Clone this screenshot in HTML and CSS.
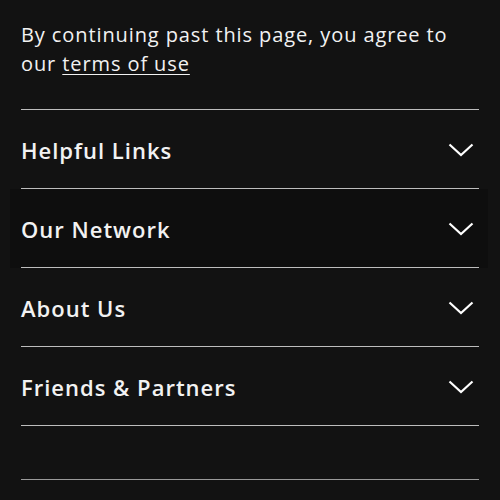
FILE: index.html
```html
<!DOCTYPE html>
<html lang="en">
    <head>
        <meta charset="UTF-8">
        <meta name="viewport" content="width=device-width, initial-scale=1.0">
        <title>Footer</title>
        <link rel="stylesheet" href="styles.css">
    </head>
    <body>
        <footer class="rodape">
            <p class="aviso">By continuing past this page, you agree to <span class="junto">our <a href="#">terms of use</a></span></p>

            <div class="secoes">
                <div class="secao">
                    <span>Helpful Links</span>
                    <svg class="seta" width="26" height="14" viewBox="0 0 26 14"><path d="M1.5 1.5 L13 12 L24.5 1.5" fill="none" stroke="#fff" stroke-width="2.2"/></svg>
                </div>
                <div class="secao ativa">
                    <span>Our Network</span>
                    <svg class="seta" width="26" height="14" viewBox="0 0 26 14"><path d="M1.5 1.5 L13 12 L24.5 1.5" fill="none" stroke="#fff" stroke-width="2.2"/></svg>
                </div>
                <div class="secao">
                    <span>About Us</span>
                    <svg class="seta" width="26" height="14" viewBox="0 0 26 14"><path d="M1.5 1.5 L13 12 L24.5 1.5" fill="none" stroke="#fff" stroke-width="2.2"/></svg>
                </div>
                <div class="secao">
                    <span>Friends &amp; Partners</span>
                    <svg class="seta" width="26" height="14" viewBox="0 0 26 14"><path d="M1.5 1.5 L13 12 L24.5 1.5" fill="none" stroke="#fff" stroke-width="2.2"/></svg>
                </div>
            </div>

            <div class="fim"></div>
        </footer>
    </body>
</html>
```

FILE: styles.css
```css
html, body {
    height: 100%;
}

body {
    margin: 0;
    padding: 0;
    background: #121212;
    color: #f2f2f2;
    font-family: 'Open Sans', 'Noto Sans', sans-serif;
}

.rodape {
    padding: 20px 21px 0;
}

.aviso {
    margin: 0;
    font-size: 20px;
    line-height: 29px;
    letter-spacing: 0.9px;
}

.junto {
    white-space: nowrap;
}

.aviso a {
    color: #f2f2f2;
    text-decoration: underline;
    text-underline-offset: 3px;
    text-decoration-thickness: 1px;
}

.secoes {
    margin-top: 31px;
    border-top: 1px solid #bdbdbd;
}

.secao {
    display: flex;
    justify-content: space-between;
    align-items: center;
    height: 79px;
    padding-top: 2px;
    box-sizing: border-box;
    border-bottom: 1px solid #bdbdbd;
    font-size: 22px;
    font-weight: 600;
    letter-spacing: 1px;
}

.secao.ativa {
    background: #0e0e0e;
    box-shadow: -11px 0 0 #0e0e0e, 9px 0 0 #0e0e0e;
}

.seta {
    margin-right: 5px;
}

.fim {
    margin-top: 53px;
    border-top: 1px solid #9a9a9a;
}
```
